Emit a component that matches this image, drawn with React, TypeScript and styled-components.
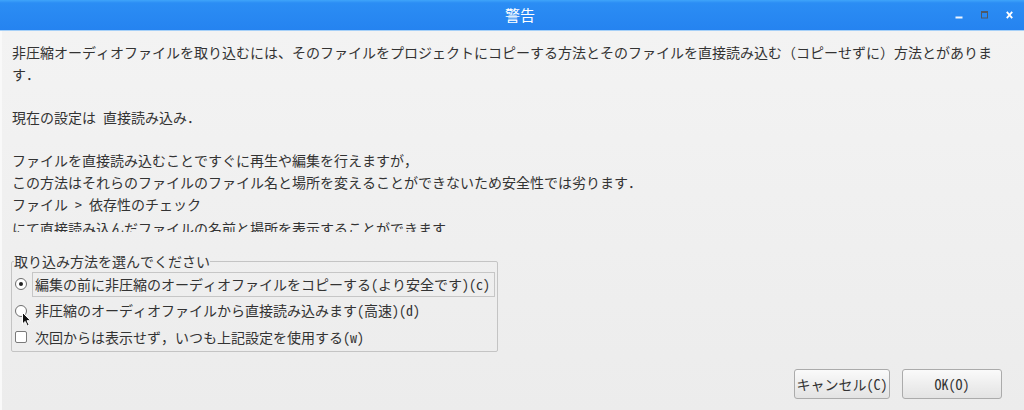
import React from "react"
import styled, { createGlobalStyle } from "styled-components"

const GlobalStyle = createGlobalStyle`
  html, body {
    margin: 0;
    padding: 0;
    background: #eeeeee;
  }
  body {
    font-family: "Noto Sans Mono CJK JP", "Noto Sans CJK JP", sans-serif;
    color: #333333;
  }
`

const Window = styled.div`
  position: relative;
  width: 1024px;
  height: 410px;
  display: flex;
  flex-direction: column;
  overflow: hidden;
`

const TitleBar = styled.div`
  height: 30px;
  flex: none;
  display: grid;
  grid-template-columns: 1fr auto 1fr;
  align-items: center;
  background: linear-gradient(#3fa4fa 0, #2b8df4 3px, #2583f0 100%);
  border-bottom: 1px solid #a6d0f8;
`

const Title = styled.div`
  grid-column: 2;
  margin-left: 16px;
  color: #ffffff;
  font-family: "Noto Sans CJK JP", sans-serif;
  font-size: 15px;
  line-height: 30px;
`

const Controls = styled.div`
  grid-column: 3;
  justify-self: end;
  display: flex;
  align-items: center;
  gap: 18px;
  padding-right: 11px;
  height: 30px;
`

const Body = styled.div`
  flex: 1;
  display: flex;
  flex-direction: column;
  background: linear-gradient(#f3f3f3, #ececec);
  border-left: 2px solid #f9f9f9;
`

const Message = styled.div`
  height: 201px;
  flex: none;
  overflow: hidden;
  padding: 11px 10px 0;
  box-sizing: border-box;
  font-size: 14px;
  line-height: 21.7px;
  white-space: nowrap;
`

const Line = styled.div<{ $shift?: number }>`
  height: 21.7px;
  margin-top: ${(p) => p.$shift ?? 0}px;
`

const Group = styled.fieldset`
  margin: 19px 0 0 9px;
  width: 487px;
  box-sizing: border-box;
  border: 1px solid #c4c4c4;
  border-radius: 2px;
  padding: 0 2px 0 2px;
  min-inline-size: 0;
`

const Legend = styled.legend`
  padding: 0;
  margin-left: 0;
  font-size: 14px;
  line-height: 20px;
`

const Row = styled.label`
  display: flex;
  align-items: center;
  height: 26.5px;
  font-size: 14px;
`

const Radio = styled.span<{ $checked?: boolean }>`
  flex: none;
  width: 12px;
  height: 12px;
  margin-left: 1px;
  box-sizing: border-box;
  border: 1px solid #6e6e6e;
  border-radius: 50%;
  background: #ffffff;
  display: flex;
  align-items: center;
  justify-content: center;

  &::after {
    content: "";
    width: 4px;
    height: 4px;
    border-radius: 50%;
    background: ${(p) => (p.$checked ? "#222222" : "transparent")};
  }
`

const Check = styled.span`
  flex: none;
  width: 12px;
  height: 12px;
  margin-left: 1px;
  box-sizing: border-box;
  border: 1px solid #7a7a7a;
  border-radius: 2px;
  background: #ffffff;
`

const RowText = styled.span<{ $focus?: boolean }>`
  flex: 1;
  margin-left: 5px;
  height: 25px;
  line-height: 23px;
  padding: 0 2px;
  box-sizing: border-box;
  border: 1px solid ${(p) => (p.$focus ? "#c6c6c6" : "transparent")};
  white-space: nowrap;
`

const ButtonRow = styled.div`
  margin-top: auto;
  display: flex;
  justify-content: flex-end;
  gap: 12px;
  padding: 0 22px 11px 0;
`

const Button = styled.button<{ $w: number }>`
  width: ${(p) => p.$w}px;
  height: 30px;
  padding: 0;
  border: 1px solid #ababab;
  border-radius: 3px;
  background: linear-gradient(#fafafa, #e3e3e3);
  color: #333333;
  font-family: "Noto Sans Mono CJK JP", "Noto Sans CJK JP", sans-serif;
  font-size: 14px;
`

const Cursor = styled.svg`
  position: absolute;
  left: 22px;
  top: 312px;
`

export default function App() {
  return (
    <Window>
      <GlobalStyle />
      <TitleBar>
        <Title>警告</Title>
        <Controls>
          <svg width="8" height="8" viewBox="0 0 8 8">
            <rect x="0.5" y="5.5" width="7" height="2" fill="#eef5ff" />
          </svg>
          <svg width="7" height="8" viewBox="0 0 7 8">
            <rect x="0.5" y="0.5" width="6" height="6.5" fill="none" stroke="#4e5966" strokeWidth="1" />
            <rect x="0.5" y="0.5" width="6" height="1.5" fill="#4e5966" />
          </svg>
          <svg width="7" height="8" viewBox="0 0 7 8">
            <path d="M0.8 0.8 L6.2 7.2 M6.2 0.8 L0.8 7.2" stroke="#ffffff" strokeWidth="1.8" />
          </svg>
        </Controls>
      </TitleBar>
      <Body>
        <Message>
          <Line>非圧縮オーディオファイルを取り込むには、そのファイルをプロジェクトにコピーする方法とそのファイルを直接読み込む（コピーせずに）方法とがありま</Line>
          <Line>す．</Line>
          <Line />
          <Line>現在の設定は 直接読み込み．</Line>
          <Line />
          <Line>ファイルを直接読み込むことですぐに再生や編集を行えますが，</Line>
          <Line>この方法はそれらのファイルのファイル名と場所を変えることができないため安全性では劣ります．</Line>
          <Line>ファイル &gt; 依存性のチェック</Line>
          <Line $shift={2}>にて直接読み込んだファイルの名前と場所を表示することができます</Line>
        </Message>
        <Group>
          <Legend>取り込み方法を選んでください</Legend>
          <Row>
            <Radio $checked />
            <RowText $focus>編集の前に非圧縮のオーディオファイルをコピーする(より安全です)(c)</RowText>
          </Row>
          <Row>
            <Radio />
            <RowText>非圧縮のオーディオファイルから直接読み込みます(高速)(d)</RowText>
          </Row>
          <Row>
            <Check />
            <RowText>次回からは表示せず，いつも上記設定を使用する(w)</RowText>
          </Row>
        </Group>
        <ButtonRow>
          <Button $w={96}>キャンセル(C)</Button>
          <Button $w={100}>OK(O)</Button>
        </ButtonRow>
      </Body>
      <Cursor width="10" height="15" viewBox="0 0 10 15">
        <path d="M0.5 0.5 L0.5 12 L3.2 9.4 L5.4 14 L7.2 13.2 L5 8.7 L8.6 8.7 Z" fill="#111111" stroke="#ffffff" strokeWidth="1" />
      </Cursor>
    </Window>
  )
}
